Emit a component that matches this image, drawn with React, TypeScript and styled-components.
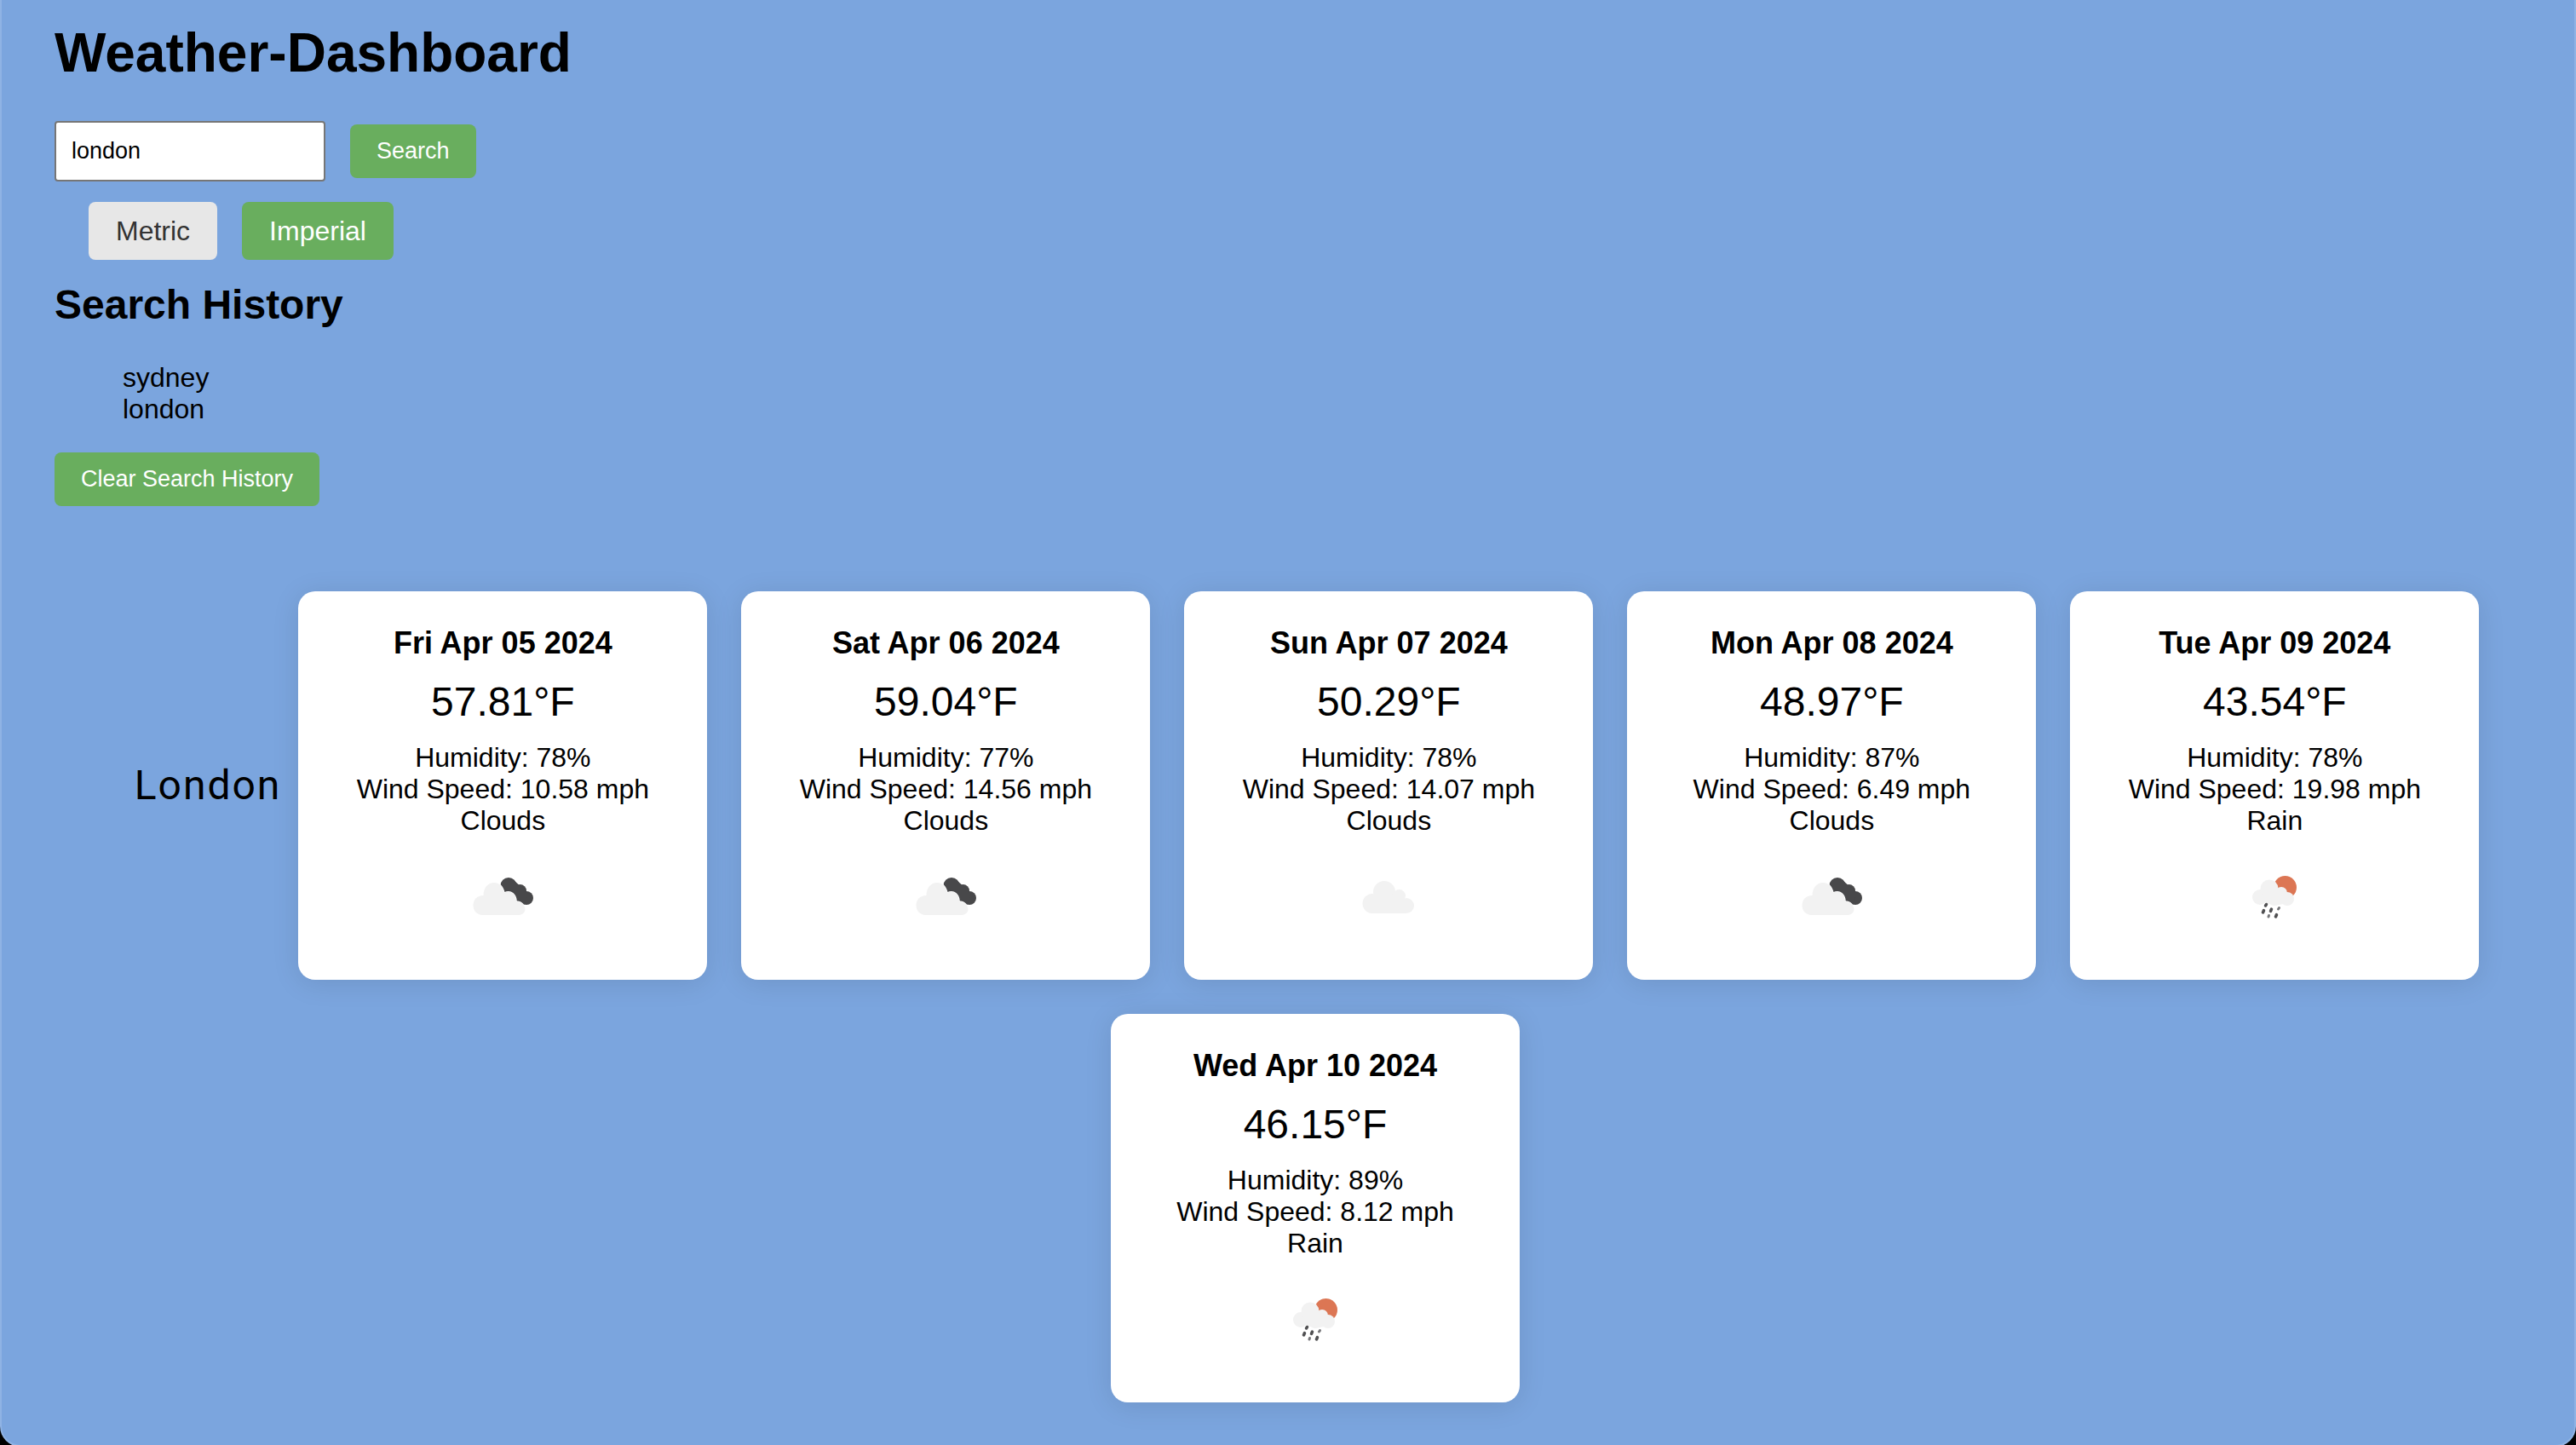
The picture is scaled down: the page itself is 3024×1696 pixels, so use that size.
import React, { useState } from "react";
import styled, { createGlobalStyle } from "styled-components";

const GlobalStyle = createGlobalStyle`
  html {
    background: #000;
  }

  body {
    margin: 0;
    font-family: "Liberation Sans", Arial, Helvetica, sans-serif;
    font-size: 32px;
    line-height: 37px;
    color: #000;
  }

  *, *::before, *::after {
    box-sizing: border-box;
  }
`;

const Page = styled.main`
  min-height: 100vh;
  padding: 25px 62px 30px;
  background: #7ba5de;
  border: 2px solid #8fb3e4;
  border-top: 0;
  border-radius: 0 0 24px 24px;
`;

const Title = styled.h1`
  margin: 0 0 43px;
  font-size: 64px;
  line-height: 74px;
`;

const SearchForm = styled.form`
  display: flex;
  align-items: center;
  gap: 29px;
  margin-bottom: 24px;
`;

const CityInput = styled.input`
  width: 318px;
  height: 71px;
  padding: 16px 18px;
  border: 2px solid #767676;
  border-radius: 4px;
  background: #fff;
  color: #000;
  font-family: inherit;
  font-size: 27px;
  outline: none;
`;

const Button = styled.button<{ $large?: boolean; $muted?: boolean }>`
  padding: ${(p) => (p.$large ? "16px 32px" : "16px 31px")};
  border: 0;
  border-radius: 8px;
  background: ${(p) => (p.$muted ? "#e7e7e7" : "#69ae5e")};
  color: ${(p) => (p.$muted ? "#333" : "#fff")};
  font-family: inherit;
  font-size: ${(p) => (p.$large ? "32px" : "27px")};
  line-height: ${(p) => (p.$large ? "36px" : "31px")};
  cursor: pointer;
`;

const UnitToggle = styled.div`
  display: flex;
  gap: 29px;
  margin: 0 0 25px 40px;
`;

const SectionTitle = styled.h2`
  margin: 0 0 40px;
  font-size: 48px;
  line-height: 55px;
`;

const HistoryList = styled.ul`
  margin: 0 0 32px;
  padding: 0 0 0 80px;
  list-style: none;
`;

const Forecast = styled.section`
  display: flex;
  flex-wrap: wrap;
  align-items: center;
  justify-content: center;
  margin-top: 80px;
  padding-left: 64px;
`;

const CityName = styled.h2`
  margin: 0;
  font-family: Roboto, "Liberation Sans", sans-serif;
  font-size: 48px;
  font-weight: 400;
  line-height: 56px;
  letter-spacing: 2px;
`;

const Card = styled.article`
  display: flex;
  flex-direction: column;
  align-items: center;
  width: 480px;
  margin: 20px;
  padding: 40px 40px 48px;
  border-radius: 20px;
  background: #fff;
  box-shadow: 0 4px 32px rgba(0, 0, 0, 0.1);
  text-align: center;
`;

const CardDate = styled.h3`
  margin: 0 0 21px;
  font-size: 36px;
  line-height: 41px;
`;

const Temperature = styled.p`
  margin: 0 0 20px;
  font-size: 48px;
  line-height: 55px;
`;

const Detail = styled.p`
  margin: 0;
`;

const Icon = styled.svg`
  display: block;
  width: 100px;
  height: 100px;
  margin-top: 20px;
`;

type Sky = "broken" | "overcast" | "rain";

function BrokenClouds() {
  return (
    <Icon viewBox="0 0 100 100" role="img" aria-label="Broken clouds">
      <g fill="#48484a">
        <circle cx="57" cy="37.5" r="9.5" />
        <circle cx="70.5" cy="43.5" r="7.5" />
        <circle cx="78" cy="52" r="8" />
        <path d="M53 43L64 32L80 46L75 60L60 52Z" />
      </g>
      <path
        fill="#f2f2f2"
        stroke="#fff"
        strokeWidth="1.5"
        paintOrder="stroke"
        d="M27 72C20 72 15.5 67 15.5 60.5C15.5 54 20 49 27.5 49C27.5 41 32 34 40 34C46 34 50 38 52 46C60 42 66 48 66 56C72 56 76.5 61 76.5 65C76.5 69 73 72 69 72Z"
      />
    </Icon>
  );
}

function OvercastCloud() {
  return (
    <Icon viewBox="0 0 100 100" role="img" aria-label="Overcast clouds">
      <g fill="#f2f2f2">
        <circle cx="31" cy="58.5" r="11.5" />
        <circle cx="45" cy="45" r="13" />
        <circle cx="62.5" cy="49.5" r="7.5" />
        <circle cx="71" cy="61" r="9" />
        <path d="M31 70V52L45 45L63 50L71 61V70Z" />
      </g>
    </Icon>
  );
}

function RainCloud() {
  return (
    <Icon viewBox="0 0 100 100" role="img" aria-label="Rain">
      <circle cx="62.5" cy="39.5" r="13.5" fill="#dc7654" />
      <g fill="#f2f2f2">
        <circle cx="33" cy="51" r="9" />
        <circle cx="44" cy="41" r="10.5" />
        <circle cx="58" cy="46" r="7" />
        <circle cx="65" cy="53" r="8" />
        <circle cx="50" cy="52" r="9" />
        <path d="M33 55L38 44L60 45L66 58L50 61Z" />
      </g>
      <g stroke="#505052" strokeWidth="3.5" strokeLinecap="round">
        <path d="M40.5 59.5L39.5 61" />
        <path d="M37.5 66.5L36.5 69" />
        <path d="M46.5 65L45.5 67.5" />
        <path d="M52.5 71.5L51.5 74" />
      </g>
      <g stroke="#77777a" strokeWidth="3" strokeLinecap="round">
        <path d="M55.5 63.5L54.5 65" />
        <path d="M43.5 72.5L43 74" />
      </g>
    </Icon>
  );
}

const skyIcons: Record<Sky, () => React.ReactElement> = {
  broken: BrokenClouds,
  overcast: OvercastCloud,
  rain: RainCloud,
};

interface Day {
  date: string;
  temp: string;
  humidity: number;
  wind: string;
  condition: string;
  sky: Sky;
}

const days: Day[] = [
  { date: "Fri Apr 05 2024", temp: "57.81", humidity: 78, wind: "10.58", condition: "Clouds", sky: "broken" },
  { date: "Sat Apr 06 2024", temp: "59.04", humidity: 77, wind: "14.56", condition: "Clouds", sky: "broken" },
  { date: "Sun Apr 07 2024", temp: "50.29", humidity: 78, wind: "14.07", condition: "Clouds", sky: "overcast" },
  { date: "Mon Apr 08 2024", temp: "48.97", humidity: 87, wind: "6.49", condition: "Clouds", sky: "broken" },
  { date: "Tue Apr 09 2024", temp: "43.54", humidity: 78, wind: "19.98", condition: "Rain", sky: "rain" },
  { date: "Wed Apr 10 2024", temp: "46.15", humidity: 89, wind: "8.12", condition: "Rain", sky: "rain" },
];

function DayCard({ day }: { day: Day }) {
  const SkyIcon = skyIcons[day.sky];
  return (
    <Card>
      <CardDate>{day.date}</CardDate>
      <Temperature>{`${day.temp}°F`}</Temperature>
      <Detail>{`Humidity: ${day.humidity}%`}</Detail>
      <Detail>{`Wind Speed: ${day.wind} mph`}</Detail>
      <Detail>{day.condition}</Detail>
      <SkyIcon />
    </Card>
  );
}

export default function App() {
  const [city, setCity] = useState("london");
  const [history, setHistory] = useState(["sydney", "london"]);

  return (
    <>
      <GlobalStyle />
      <Page>
        <Title>Weather-Dashboard</Title>
        <SearchForm onSubmit={(e) => e.preventDefault()}>
          <CityInput
            type="text"
            aria-label="City"
            value={city}
            onChange={(e) => setCity(e.target.value)}
          />
          <Button type="submit">Search</Button>
        </SearchForm>
        <UnitToggle>
          <Button type="button" $large $muted>
            Metric
          </Button>
          <Button type="button" $large>
            Imperial
          </Button>
        </UnitToggle>
        <SectionTitle>Search History</SectionTitle>
        <HistoryList>
          {history.map((name) => (
            <li key={name}>{name}</li>
          ))}
        </HistoryList>
        <Button type="button" onClick={() => setHistory([])}>
          Clear Search History
        </Button>
        <Forecast>
          <CityName>London</CityName>
          {days.map((day) => (
            <DayCard key={day.date} day={day} />
          ))}
        </Forecast>
      </Page>
    </>
  );
}
